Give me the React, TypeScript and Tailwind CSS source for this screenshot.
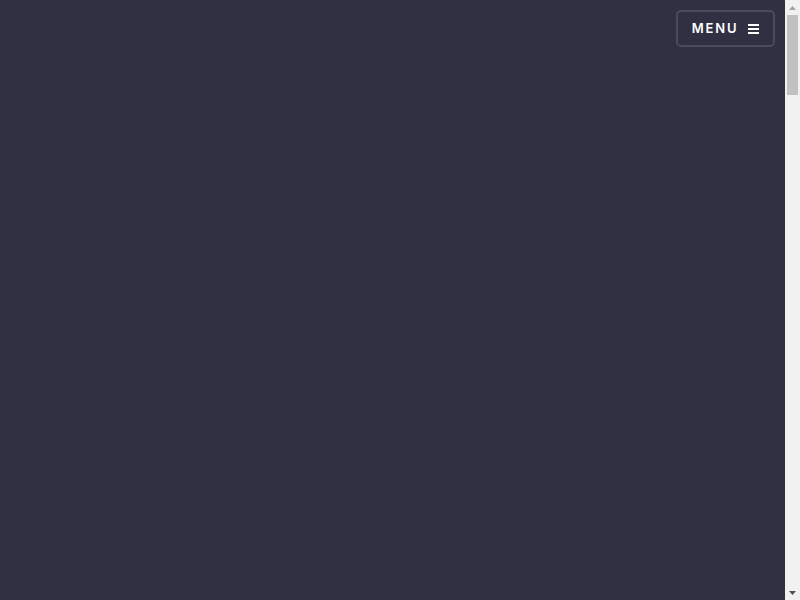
import React from "react";

export default function App() {
  return (
    <div className="flex h-[600px] overflow-hidden" style={{ fontFamily: "Inter, 'Open Sans', 'Liberation Sans', sans-serif" }}>
      <div className="relative flex-1 bg-[#2f3142]">
        <div className="absolute top-[10px] right-[10px]">
          <button className="flex items-center gap-[10px] h-[37px] w-[99px] justify-center rounded-[5px] border-2 border-[#4a4c5c] bg-[#2f3142] text-white text-[13px] font-semibold tracking-[0.14em] uppercase">
            <span>Menu</span>
            <svg width="11" height="10" viewBox="0 0 11 10" fill="white">
              <rect x="0" y="0" width="11" height="2" />
              <rect x="0" y="4" width="11" height="2" />
              <rect x="0" y="8" width="11" height="2" />
            </svg>
          </button>
        </div>
      </div>
      <div className="flex w-[15px] flex-col items-center bg-[#f1f1f1]">
        <div className="flex h-[15px] w-full items-center justify-center">
          <svg width="7" height="4" viewBox="0 0 7 4"><polygon points="3.5,0 7,4 0,4" fill="#a3a3a3" /></svg>
        </div>
        <div className="h-[80px] w-[11px] bg-[#c1c1c1]" />
        <div className="flex-1" />
        <div className="flex h-[15px] w-full items-center justify-center">
          <svg width="7" height="4" viewBox="0 0 7 4"><polygon points="0,0 7,0 3.5,4" fill="#505050" /></svg>
        </div>
      </div>
    </div>
  );
}
